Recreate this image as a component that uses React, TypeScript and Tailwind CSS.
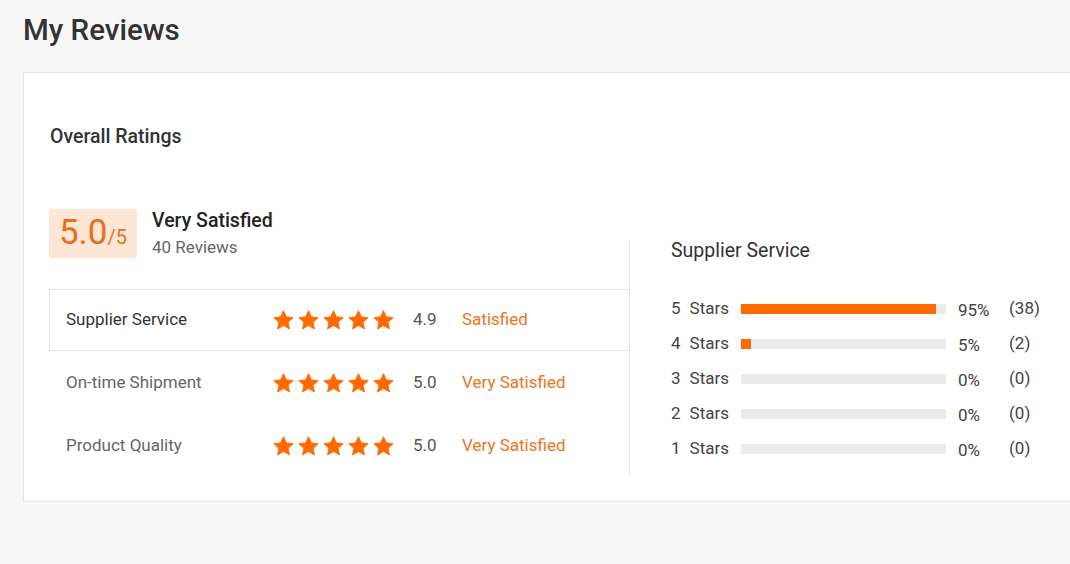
import React from "react";

const Star = () => (
  <svg width="21" height="20" viewBox="0 0 24 23" className="shrink-0">
    <path
      d="M12 0.8l3.3 7.1 7.8 0.9-5.8 5.3 1.6 7.7L12 17.9l-6.9 3.9 1.6-7.7L0.9 8.8l7.8-0.9z"
      fill="#ff6a00"
      stroke="#ff6a00"
      strokeWidth="1"
      strokeLinejoin="round"
    />
  </svg>
);

const rows = [
  { label: "Supplier Service", score: "4.9", status: "Satisfied", active: true },
  { label: "On-time Shipment", score: "5.0", status: "Very Satisfied", active: false },
  { label: "Product Quality", score: "5.0", status: "Very Satisfied", active: false },
];

const bars = [
  { n: 5, pct: 95, count: 38 },
  { n: 4, pct: 5, count: 2 },
  { n: 3, pct: 0, count: 0 },
  { n: 2, pct: 0, count: 0 },
  { n: 1, pct: 0, count: 0 },
];

export default function App() {
  return (
    <div
      className="w-[1070px] h-[564px] overflow-hidden bg-[#f7f7f7]"
      style={{ fontFamily: "Roboto, 'Liberation Sans', sans-serif" }}
    >
      <h1 className="pl-[23px] pt-[12px] h-[72px] text-[29.5px] leading-[36px] font-medium text-[#333]">
        My Reviews
      </h1>
      <div className="ml-[23px] w-[1080px] h-[430px] bg-white border border-[#e6e6e6] pl-[25px] pt-[51px]">
        <div className="pl-[1px] text-[19.5px] leading-[26px] font-medium text-[#333]">Overall Ratings</div>
        <div className="flex items-start mt-[59px]">
          <div className="w-[580px]">
            <div className="flex items-start">
              <div className="w-[88px] h-[49px] rounded-[3px] bg-[#fde6d6] flex items-baseline justify-center pt-[3px] text-[#ea6f1c]">
                <span className="text-[35px] leading-[42px]">5.0</span>
                <span className="text-[20px] leading-[24px]">/5</span>
              </div>
              <div className="ml-[15px]">
                <div className="text-[19.5px] leading-[23px] font-medium text-[#222]">Very Satisfied</div>
                <div className="text-[17px] leading-[20px] mt-[5px] text-[#666]">40 Reviews</div>
              </div>
            </div>
            <div className="mt-[31px]">
              {rows.map((r) => (
                <div
                  key={r.label}
                  className={
                    r.active
                      ? "flex items-center h-[62px] border border-r-0 border-[#e6e6e6] pl-[16px]"
                      : "flex items-center h-[63px] pl-[17px]"
                  }
                >
                  <div
                    className={
                      r.active
                        ? "w-[207px] text-[17px] text-[#333]"
                        : "w-[207px] text-[17px] text-[#666]"
                    }
                  >
                    {r.label}
                  </div>
                  <div className="flex gap-[4px]">
                    <Star />
                    <Star />
                    <Star />
                    <Star />
                    <Star />
                  </div>
                  <div className="ml-[19px] w-[49px] text-[17px] text-[#555]">{r.score}</div>
                  <div className="text-[17px] text-[#ee7418]">{r.status}</div>
                </div>
              ))}
            </div>
          </div>
          <div className="mt-[31px] border-l border-[#e6e6e6] h-[235px] pl-[41px]">
            <div className="text-[19.5px] leading-[22px] text-[#333]">Supplier Service</div>
            <div className="mt-[37px] flex flex-col gap-[15px]">
              {bars.map((b) => (
                <div key={b.n} className="flex items-center h-[20px] text-[17px] text-[#444]">
                  <div className="w-[70px] flex gap-[9px]">
                    <span>{b.n}</span>
                    <span>Stars</span>
                  </div>
                  <div className="w-[205px] h-[10px] bg-[#ebebeb]">
                    <div className="h-full bg-[#ff6a00]" style={{ width: `${b.pct}%` }} />
                  </div>
                  <div className="ml-[12px] w-[51px] pt-[4px]">{b.pct}%</div>
                  <div>({b.count})</div>
                </div>
              ))}
            </div>
          </div>
        </div>
      </div>
    </div>
  );
}
